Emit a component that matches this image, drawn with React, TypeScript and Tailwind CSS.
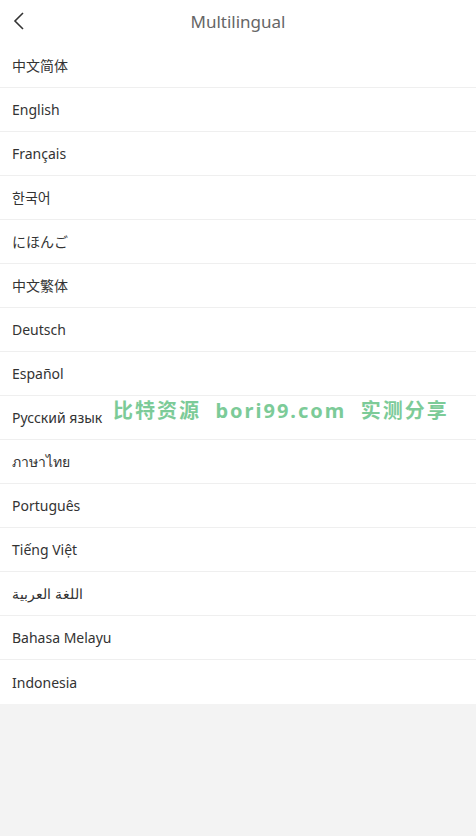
const languages = [
  "中文简体",
  "English",
  "Français",
  "한국어",
  "にほんご",
  "中文繁体",
  "Deutsch",
  "Español",
  "Русский язык",
  "ภาษาไทย",
  "Português",
  "Tiếng Việt",
  "اللغة العربية",
  "Bahasa Melayu",
  "Indonesia",
];

export default function App() {
  return (
    <div
      className="relative min-h-[836px] w-full bg-[#f3f3f3]"
      style={{ fontFamily: "'Noto Sans', 'Noto Sans CJK SC', sans-serif" }}
    >
      {/* Header */}
      <header className="relative flex h-[44px] items-center justify-center bg-white">
        <button className="absolute left-[10px] top-[11px] text-[#333]" aria-label="back">
          <svg width="20" height="20" viewBox="0 0 20 20" fill="none">
            <path d="M13 2 L5 10 L13 18" stroke="#333" strokeWidth="1.6" />
          </svg>
        </button>
        <h1 className="text-[17px] text-[#666]">Multilingual</h1>
      </header>

      {/* Language list */}
      <ul className="bg-white">
        {languages.map((lang, i) => (
          <li
            key={lang}
            className={
              "flex h-[44px] items-center px-3 text-[14px] text-[#333] " +
              (i < languages.length - 1 ? "border-b border-[#efefef]" : "")
            }
          >
            <span dir="auto">{lang}</span>
          </li>
        ))}
      </ul>

      {/* Watermark */}
      <div className="pointer-events-none absolute left-[113px] top-[396px] text-[20px] font-bold tracking-[2px] whitespace-nowrap text-[#7ccb98]">
        比特资源&nbsp;&nbsp;bori99.com&nbsp;&nbsp;实测分享
      </div>
    </div>
  );
}
